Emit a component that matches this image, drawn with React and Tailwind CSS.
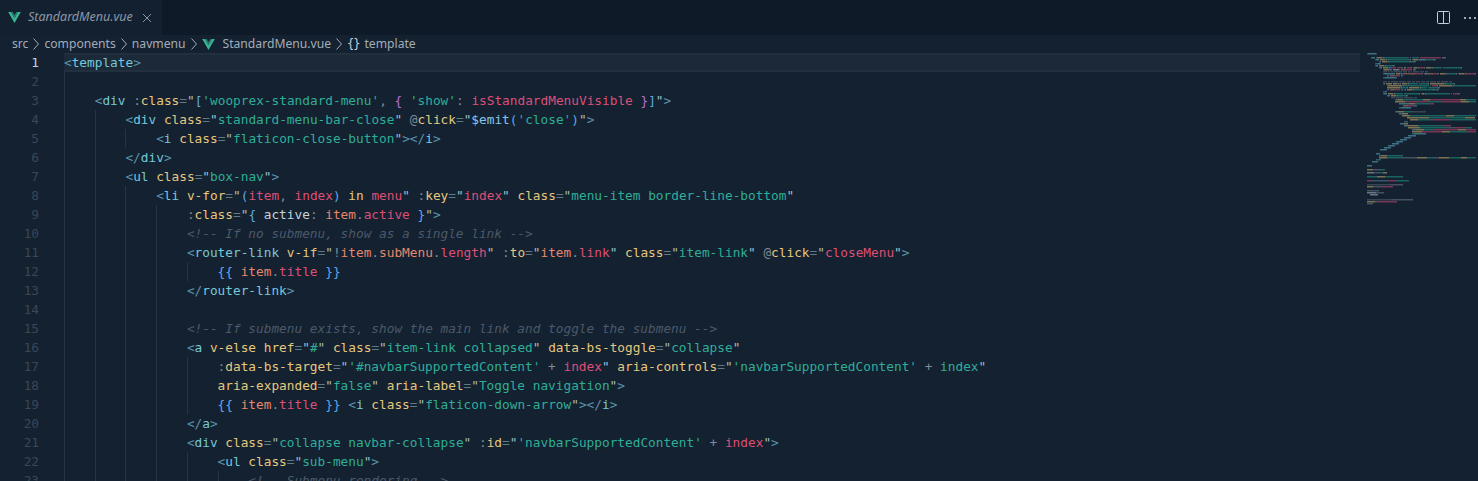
const COLORS = {
  p: "text-[#5b93ab]", g: "text-[#74c9da]", a: "text-[#e5c87e]", e: "text-[#5d7c86]",
  s: "text-[#2fae97]", q: "text-[#a5c0c6]", w: "text-[#c6d2dc]", r: "text-[#dd4f76]",
  o: "text-[#e5876d]", d: "text-[#7d8b99]", c: "text-[#4b5969] italic", b: "text-[#5fa8e6]",
  v: "text-[#b56fdc]", l: "text-[#86c6ea]", x: "text-[#c6d2dc]",
};
const FILL = {
  p: "#4d7c92", g: "#5ba6b6", a: "#c2a86a", e: "#4f6a74", s: "#21907d", q: "#8aa2a8", w: "#a5b0ba",
  r: "#b9446a", o: "#c0725c", d: "#66727e", c: "#4f5d6d", b: "#4f8cc0", v: "#9560b5", l: "#70a5c4", x: "#a5b0ba",
};

const LINES = [
  [0, "p<¦gtemplate¦p>"],
  [0, ""],
  [4, "p<¦gdiv¦x ¦d:¦aclass¦e=¦q\"¦b[¦s'wooprex-standard-menu'¦d,¦x ¦v{¦x ¦s'show'¦d:¦x ¦risStandardMenuVisible¦x ¦v}¦b]¦q\"¦p>"],
  [8, "p<¦gdiv¦x ¦aclass¦e=¦q\"¦sstandard-menu-bar-close¦q\"¦x ¦d@¦aclick¦e=¦q\"¦l$emit¦b(¦s'close'¦b)¦q\"¦p>"],
  [12, "p<¦gi¦x ¦aclass¦e=¦q\"¦sflaticon-close-button¦q\"¦p></¦gi¦p>"],
  [8, "p</¦gdiv¦p>"],
  [8, "p<¦gul¦x ¦aclass¦e=¦q\"¦sbox-nav¦q\"¦p>"],
  [12, "p<¦gli¦x ¦av-for¦e=¦q\"¦b(¦ritem¦d,¦x ¦rindex¦b)¦x ¦ain¦x ¦rmenu¦q\"¦x ¦d:¦akey¦e=¦q\"¦rindex¦q\"¦x ¦aclass¦e=¦q\"¦smenu-item border-line-bottom¦q\""],
  [16, "d:¦aclass¦e=¦q\"¦b{¦x ¦wactive¦d:¦x ¦oitem¦d.¦ractive¦x ¦b}¦q\"¦p>"],
  [16, "c<!-- If no submenu, show as a single link -->"],
  [16, "p<¦grouter-link¦x ¦av-if¦e=¦q\"¦d!¦oitem¦d.¦osubMenu¦d.¦rlength¦q\"¦x ¦d:¦ato¦e=¦q\"¦oitem¦d.¦rlink¦q\"¦x ¦aclass¦e=¦q\"¦sitem-link¦q\"¦x ¦d@¦aclick¦e=¦q\"¦rcloseMenu¦q\"¦p>"],
  [20, "b{{¦x ¦oitem¦d.¦rtitle¦x ¦b}}"],
  [16, "p</¦grouter-link¦p>"],
  [12, "", 4],
  [16, "c<!-- If submenu exists, show the main link and toggle the submenu -->"],
  [16, "p<¦ga¦x ¦av-else¦x ¦ahref¦e=¦q\"¦s#¦q\"¦x ¦aclass¦e=¦q\"¦sitem-link collapsed¦q\"¦x ¦adata-bs-toggle¦e=¦q\"¦scollapse¦q\""],
  [20, "d:¦adata-bs-target¦e=¦q\"¦s'#navbarSupportedContent'¦x ¦d+¦x ¦rindex¦q\"¦x ¦aaria-controls¦e=¦q\"¦s'navbarSupportedContent' ¦d+¦s index¦q\""],
  [20, "aaria-expanded¦e=¦q\"¦sfalse¦q\"¦x ¦aaria-label¦e=¦q\"¦sToggle navigation¦q\"¦p>"],
  [20, "b{{¦x ¦oitem¦d.¦rtitle¦x ¦b}}¦x ¦p<¦gi¦x ¦aclass¦e=¦q\"¦sflaticon-down-arrow¦q\"¦p></¦gi¦p>"],
  [16, "p</¦ga¦p>"],
  [16, "p<¦gdiv¦x ¦aclass¦e=¦q\"¦scollapse navbar-collapse¦q\"¦x ¦d:¦aid¦e=¦q\"¦s'navbarSupportedContent'¦x ¦d+¦x ¦rindex¦q\"¦p>"],
  [20, "p<¦gul¦x ¦aclass¦e=¦q\"¦ssub-menu¦q\"¦p>"],
  [24, "c<!-- Submenu rendering -->"],
];

const parse = (s) => (s ? s.split("¦").map((seg) => [seg[0], seg.slice(1)]) : []);

// Overview rows below the visible code: [y, x, "colour width ..."]
const MINI_REST = [
  [99, 1395, "p1 g2 a5 s20 a7 r30 a6 s12"],
  [101, 1395, "a10 r22 s14 r20 a8 s8"],
  [103, 1399, "g10 a6 s14 r5"],
  [105, 1403, "o5 r6 b3"],
  [107, 1399, "p2 g10"],
  [111, 1395, "p1 g2 a6 s8 c14"],
  [113, 1399, "g4 a5"],
  [115, 1402, "a8 s36 a8 s22 q4"],
  [117, 1407, "a22 s36 a10"],
  [119, 1410, "a8 s14 r18 s30"],
  [121, 1404, "p4"],
  [123, 1400, "g4 a4"],
  [125, 1404, "g4 a10 s24 d3 r6"],
  [127, 1408, "a12 s28 d8 r10 s6"],
  [129, 1412, "g4 a8 s10 r24 a8 r20 a8"],
  [131, 1412, "a10 r20 a8 s18 r10 a6"],
  [133, 1412, "p2 g12"],
  [135, 1408, "g8"],
  [137, 1404, "g7"],
  [139, 1400, "g7"],
  [141, 1396, "g7"],
  [143, 1392, "g7"],
  [145, 1388, "g7"],
  [147, 1384, "g7"],
  [149, 1380, "g7"],
  [153, 1376, "g4"],
  [155, 1379, "g2 a6 s16"],
  [157, 1379, "a8 s14 d16 a10 s6 d6 a10 s12 a6 s20"],
  [159, 1376, "p5"],
  [161, 1372, "g6"],
  [165, 1367, "g5"],
  [169, 1367, "a6 d8 s4"],
  [172, 1367, "w7 d6 s3 a4"],
  [176, 1367, "s10 a8 s18"],
  [180, 1367, "r4 p16 r8 s14"],
  [184, 1367, "c24 d12"],
  [186, 1367, "a6 d8 r12"],
  [190, 1367, "d12"],
  [192, 1367, "w9 d8"],
  [194, 1370, "w8"],
  [199, 1367, "c24 d22"],
  [201, 1367, "a8 d2 r20"],
  [203, 1367, "d6"],
];

function Minimap() {
  const rows = [];
  const addRun = (key, x, y, n, k, text) => {
    for (let c = 0; c < n; c++) {
      if (text && text[c] === " ") continue;
      rows.push(<rect key={`${key}-${c}`} x={x + c} y={y} width="0.8" height="1.5" fill={FILL[k]} />);
    }
  };
  LINES.forEach(([indent, src], i) => {
    let x = 7 + indent;
    const y = 53 + i * 2;
    parse(src).forEach(([k, text], j) => {
      addRun(`a${i}-${j}`, x, y, text.length, k, text);
      x += text.length;
    });
  });
  MINI_REST.forEach(([y, x0, spec], i) => {
    let x = x0 - 1360;
    spec.split(" ").forEach((part, j) => {
      const w = Number(part.slice(1));
      addRun(`b${i}-${j}`, x, y, w, part[0]);
      x += w;
    });
  });
  return (
    <div className="w-[118px] shrink-0 -mt-[53px]">
      <svg width="118" height="215" className="opacity-75 blur-[0.5px]">
        <clipPath id="mm"><rect x="0" y="0" width="116" height="215" /></clipPath>
        <g clipPath="url(#mm)">{rows}</g>
      </svg>
    </div>
  );
}

function VueIcon({ className }) {
  return (
    <svg viewBox="0 0 24 21" className={className}>
      <path d="M0 0 L12 21 L24 0 L18.5 0 L12 11.5 L5.5 0 Z" fill="#37b593" />
      <path d="M5.5 0 L12 11.5 L18.5 0 L15.5 0 L12 6 L8.5 0 Z" fill="#2a7f78" />
    </svg>
  );
}

function Chevron({ className }) {
  return (
    <svg viewBox="0 0 8 14" className={`w-[8px] h-[14px] shrink-0 ${className}`}>
      <path d="M1.5 1.5 L6.5 7 L1.5 12.5" fill="none" stroke="#a3adb8" strokeWidth="1" />
    </svg>
  );
}

function CodeLine({ n, indent, src, guides, active }) {
  const levels = guides ?? Math.floor(indent / 4);
  return (
    <div className="flex h-[19px] leading-[19px]">
      <div className={`w-[39px] shrink-0 text-right ${active ? "text-[#c9d1d9]" : "text-[#3a4757]"}`}>{n}</div>
      <div className="w-[25px] shrink-0" />
      <div className={`flex-1 min-w-0 flex whitespace-pre ${active ? "bg-[#1b2939] border-y-2 border-[#222f3e] leading-[15px] h-[19px]" : ""}`}>
        {Array.from({ length: levels }).map((_, i) => (
          <span key={i} className="w-[30.72px] shrink-0 h-[19px] border-l border-[#263444]" />
        ))}
        {!src && levels === 0 && !active && <span className="w-px h-[19px] bg-[#263444]" />}
        <span className={levels * 4 < indent ? "pl-[30.72px]" : ""}>
          {parse(src).map(([k, text], i) => (
            <span key={i} className={COLORS[k]}>{text}</span>
          ))}
        </span>
      </div>
    </div>
  );
}

export default function App() {
  return (
    <div className="h-[481px] w-[1478px] overflow-hidden flex flex-col bg-[#142131]">
      <div className="h-[35px] shrink-0 flex bg-[#0f1a29] font-['Noto_Sans','Open_Sans',sans-serif]">
        <div className="w-[162px] flex items-center bg-[#132030] pl-[8px]">
          <VueIcon className="w-[13px] h-[11px] shrink-0" />
          <span className="ml-[7px] text-[12.5px] italic text-[#8c97a5]">StandardMenu.vue</span>
          <svg viewBox="0 0 10 10" className="w-[10px] h-[10px] ml-[9px] shrink-0">
            <path d="M1 1 L9 9 M9 1 L1 9" stroke="#8c97a5" strokeWidth="1" />
          </svg>
        </div>
        <div className="flex-1" />
        <div className="flex items-center pr-[1px]">
          <svg width="14" height="14" viewBox="0 0 14 14">
            <rect x="0.5" y="0.5" width="12" height="12" rx="1" fill="none" stroke="#c9ced6" strokeWidth="1" />
            <path d="M6.5 0.5 V12.5" stroke="#c9ced6" strokeWidth="1" />
          </svg>
          <svg width="14" height="4" viewBox="0 0 14 4" className="ml-[12px]">
            <circle cx="2" cy="2" r="1.1" fill="#c9ced6" />
            <circle cx="7" cy="2" r="1.1" fill="#c9ced6" />
            <circle cx="12" cy="2" r="1.1" fill="#c9ced6" />
          </svg>
        </div>
      </div>

      <div className="h-[18px] shrink-0 flex items-center pl-[12px] text-[12.15px] text-[#a3adb8] font-['Noto_Sans','Open_Sans',sans-serif]">
        <span>src</span>
        <Chevron className="mx-[4px]" />
        <span>components</span>
        <Chevron className="mx-[4px]" />
        <span>navmenu</span>
        <Chevron className="mx-[4px]" />
        <VueIcon className="w-[13px] h-[11px] shrink-0 mr-[8px]" />
        <span>StandardMenu.vue</span>
        <Chevron className="mx-[4px]" />
        <span className="text-[#c5cdd6] mr-[5px] font-['DejaVu_Sans_Mono',monospace] text-[12px] tracking-[-1px]">{"{}"}</span>
        <span>template</span>
      </div>

      <div className="flex-1 min-h-0 flex overflow-hidden">
        <div className="w-[1360px] shrink-0 font-['DejaVu_Sans_Mono',monospace] text-[12.77px] bg-[#142131]">
          {LINES.map(([indent, src, guides], i) => (
            <CodeLine key={i} n={i + 1} indent={indent} src={src} guides={guides} active={i === 0} />
          ))}
        </div>
        <Minimap />
      </div>
    </div>
  );
}
